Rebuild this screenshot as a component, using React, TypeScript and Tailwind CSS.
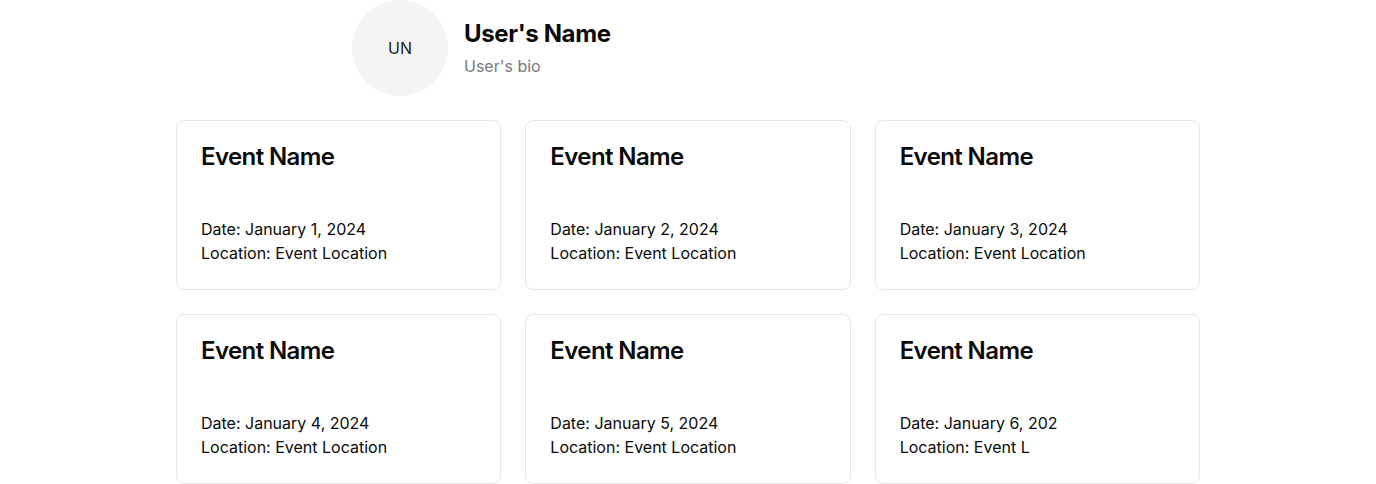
const events = [
  { date: "January 1, 2024", location: "Event Location" },
  { date: "January 2, 2024", location: "Event Location" },
  { date: "January 3, 2024", location: "Event Location" },
  { date: "January 4, 2024", location: "Event Location" },
  { date: "January 5, 2024", location: "Event Location" },
  { date: "January 6, 202", location: "Event L" },
]

function EventCard({ date, location }: { date: string; location: string }) {
  return (
    <div className="flex flex-col rounded-lg border border-gray-200 bg-white p-6 text-[#0a0a0a]">
      <h3 className="text-2xl font-semibold leading-none tracking-tight">Event Name</h3>
      <div className="mt-12 text-base leading-6">
        <p>Date: {date}</p>
        <p>Location: {location}</p>
      </div>
    </div>
  )
}

export default function App() {
  return (
    <div className="min-h-screen bg-white font-['Inter',sans-serif] text-[#0a0a0a]">
      <div className="max-w-2xl mx-auto flex items-center gap-4 mb-6">
        <div className="w-24 h-24 rounded-full bg-[#f4f4f4] flex items-center justify-center text-base text-[#1a1a1a]">
          UN
        </div>
        <div className="flex flex-col">
          <h1 className="text-2xl font-bold leading-8 tracking-[-0.015em]">User's Name</h1>
          <p className="mt-1 text-base leading-6 text-[#7a7a7a]">User's bio</p>
        </div>
      </div>
      <div className="max-w-5xl mx-auto grid grid-cols-3 gap-6">
        {events.map((e, i) => (
          <EventCard key={i} date={e.date} location={e.location} />
        ))}
      </div>
    </div>
  )
}
